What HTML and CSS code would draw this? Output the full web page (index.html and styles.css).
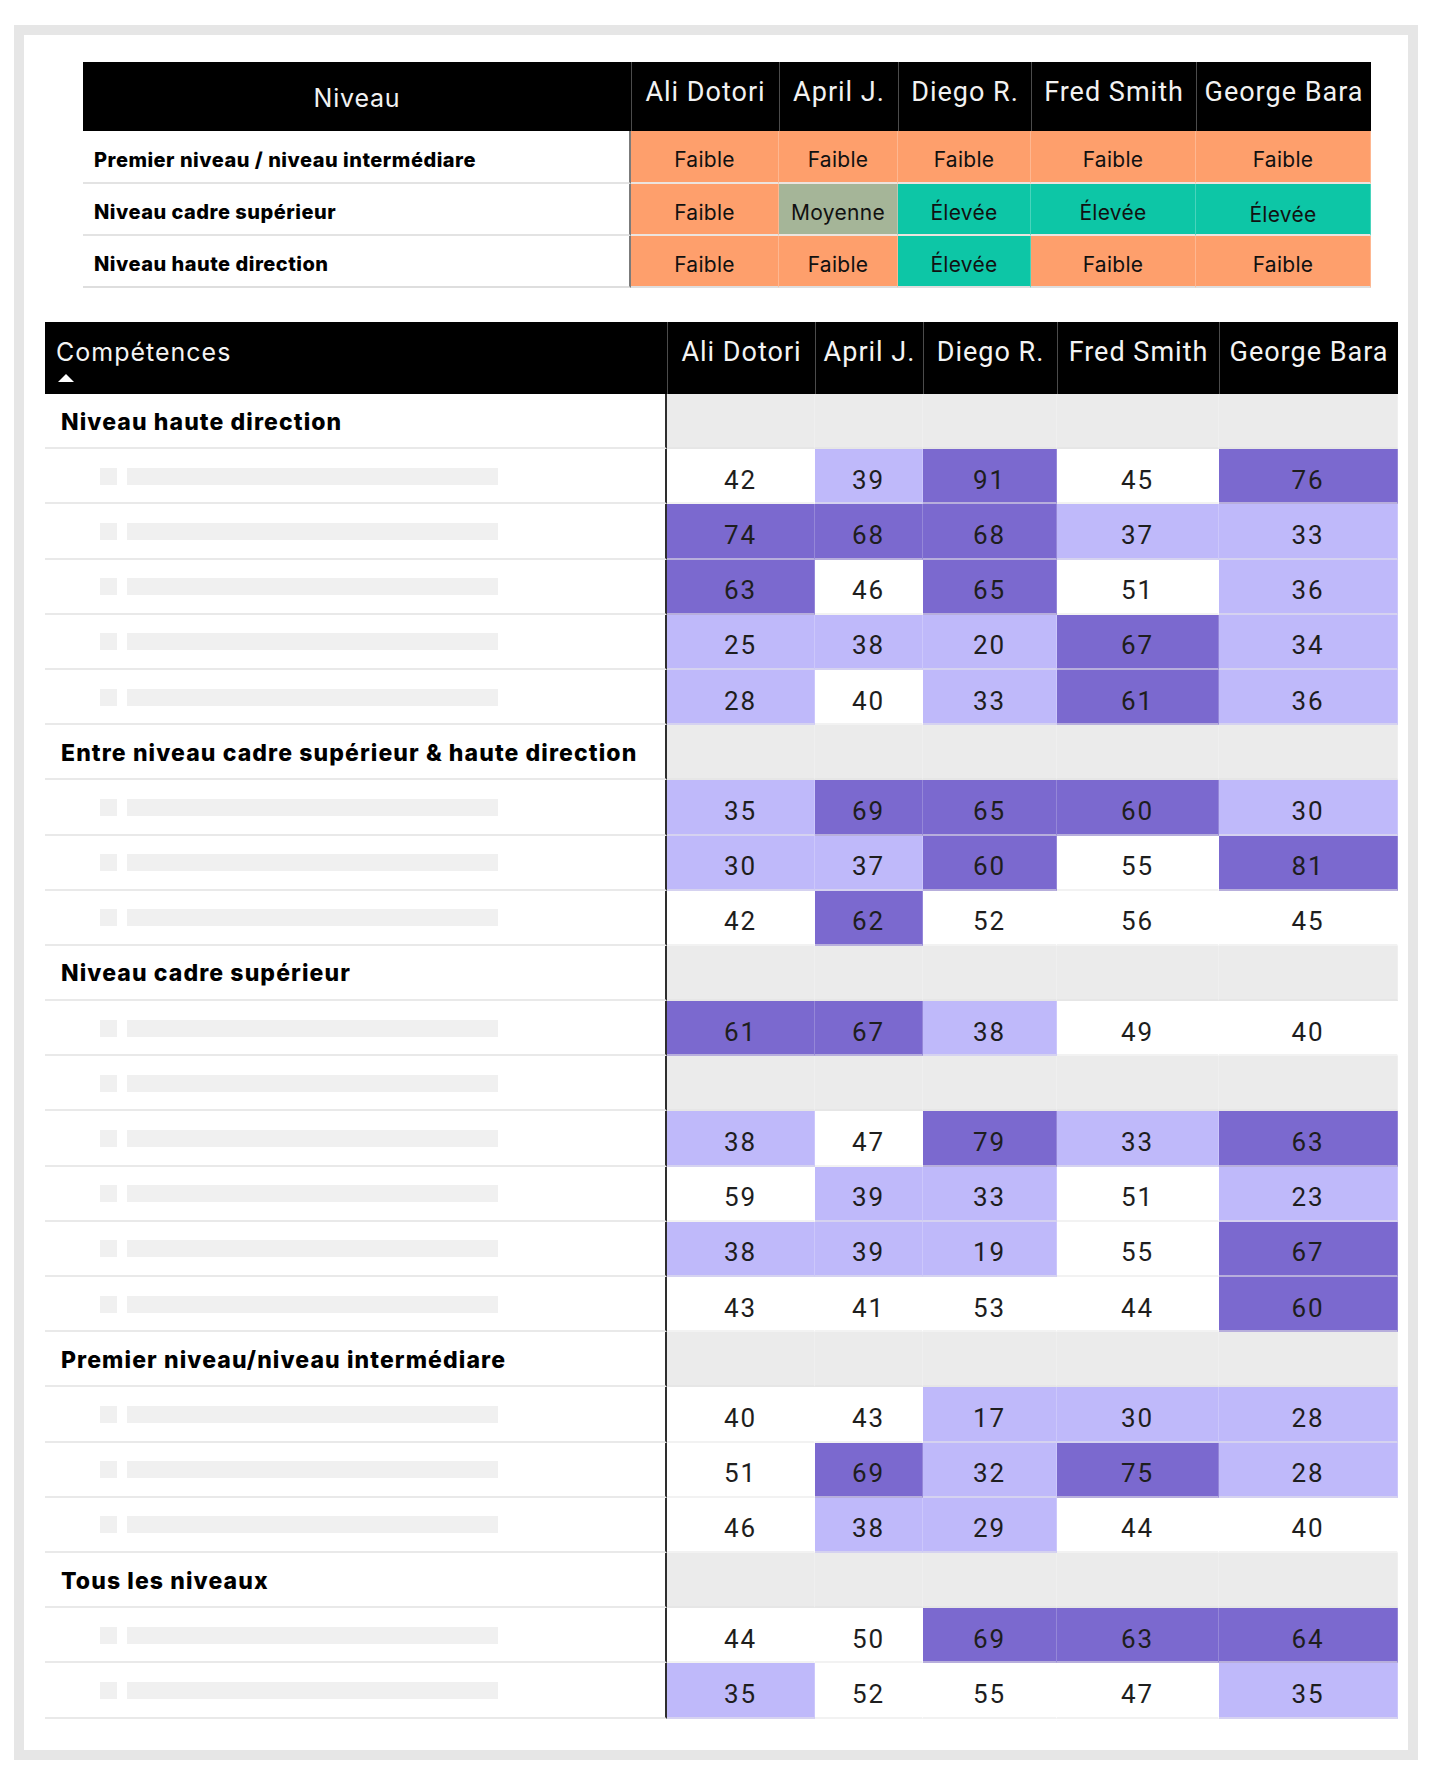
FILE: index.html
```html
<!DOCTYPE html>
<html lang="fr">
<head>
<meta charset="utf-8">
<title>Niveaux et compétences</title>
<link rel="stylesheet" href="styles.css">
</head>
<body>
<div class="frame">
  <div class="level-table">
    <div class="lt-head lt-title">Niveau</div>
    <div class="lt-head lt-name">Ali Dotori</div>
    <div class="lt-head lt-name">April J.</div>
    <div class="lt-head lt-name">Diego R.</div>
    <div class="lt-head lt-name">Fred Smith</div>
    <div class="lt-head lt-name">George Bara</div>

    <div class="lt-label">Premier niveau / niveau intermédiare</div>
    <div class="lt-cell low">Faible</div>
    <div class="lt-cell low">Faible</div>
    <div class="lt-cell low">Faible</div>
    <div class="lt-cell low">Faible</div>
    <div class="lt-cell low">Faible</div>

    <div class="lt-label">Niveau cadre supérieur</div>
    <div class="lt-cell low">Faible</div>
    <div class="lt-cell mid">Moyenne</div>
    <div class="lt-cell high">Élevée</div>
    <div class="lt-cell high">Élevée</div>
    <div class="lt-cell high lower">Élevée</div>

    <div class="lt-label last">Niveau haute direction</div>
    <div class="lt-cell low last">Faible</div>
    <div class="lt-cell low last">Faible</div>
    <div class="lt-cell high last">Élevée</div>
    <div class="lt-cell low last">Faible</div>
    <div class="lt-cell low last">Faible</div>
  </div>

  <div class="skill-table" id="skills">
    <div class="st-head st-title">Compétences<span class="sort-arrow"></span></div>
    <div class="st-head st-name">Ali Dotori</div>
    <div class="st-head st-name">April J.</div>
    <div class="st-head st-name">Diego R.</div>
    <div class="st-head st-name">Fred Smith</div>
    <div class="st-head st-name">George Bara</div>

    <div class="st-group">Niveau haute direction</div>
    <div class="st-num gray"></div><div class="st-num gray"></div><div class="st-num gray"></div><div class="st-num gray"></div><div class="st-num gray"></div>

    <div class="st-item"><span class="ph-box"></span><span class="ph-bar"></span></div>
    <div class="st-num">42</div><div class="st-num l">39</div><div class="st-num d">91</div><div class="st-num">45</div><div class="st-num d">76</div>
    <div class="st-item"><span class="ph-box"></span><span class="ph-bar"></span></div>
    <div class="st-num d">74</div><div class="st-num d">68</div><div class="st-num d">68</div><div class="st-num l">37</div><div class="st-num l">33</div>
    <div class="st-item"><span class="ph-box"></span><span class="ph-bar"></span></div>
    <div class="st-num d">63</div><div class="st-num">46</div><div class="st-num d">65</div><div class="st-num">51</div><div class="st-num l">36</div>
    <div class="st-item"><span class="ph-box"></span><span class="ph-bar"></span></div>
    <div class="st-num l">25</div><div class="st-num l">38</div><div class="st-num l">20</div><div class="st-num d">67</div><div class="st-num l">34</div>
    <div class="st-item"><span class="ph-box"></span><span class="ph-bar"></span></div>
    <div class="st-num l">28</div><div class="st-num">40</div><div class="st-num l">33</div><div class="st-num d">61</div><div class="st-num l">36</div>

    <div class="st-group">Entre niveau cadre supérieur &amp; haute direction</div>
    <div class="st-num gray"></div><div class="st-num gray"></div><div class="st-num gray"></div><div class="st-num gray"></div><div class="st-num gray"></div>

    <div class="st-item"><span class="ph-box"></span><span class="ph-bar"></span></div>
    <div class="st-num l">35</div><div class="st-num d">69</div><div class="st-num d">65</div><div class="st-num d">60</div><div class="st-num l">30</div>
    <div class="st-item"><span class="ph-box"></span><span class="ph-bar"></span></div>
    <div class="st-num l">30</div><div class="st-num l">37</div><div class="st-num d">60</div><div class="st-num">55</div><div class="st-num d">81</div>
    <div class="st-item"><span class="ph-box"></span><span class="ph-bar"></span></div>
    <div class="st-num">42</div><div class="st-num d">62</div><div class="st-num">52</div><div class="st-num">56</div><div class="st-num">45</div>

    <div class="st-group">Niveau cadre supérieur</div>
    <div class="st-num gray"></div><div class="st-num gray"></div><div class="st-num gray"></div><div class="st-num gray"></div><div class="st-num gray"></div>

    <div class="st-item"><span class="ph-box"></span><span class="ph-bar"></span></div>
    <div class="st-num d">61</div><div class="st-num d">67</div><div class="st-num l">38</div><div class="st-num">49</div><div class="st-num">40</div>
    <div class="st-item"><span class="ph-box"></span><span class="ph-bar"></span></div>
    <div class="st-num gray"></div><div class="st-num gray"></div><div class="st-num gray"></div><div class="st-num gray"></div><div class="st-num gray"></div>
    <div class="st-item"><span class="ph-box"></span><span class="ph-bar"></span></div>
    <div class="st-num l">38</div><div class="st-num">47</div><div class="st-num d">79</div><div class="st-num l">33</div><div class="st-num d">63</div>
    <div class="st-item"><span class="ph-box"></span><span class="ph-bar"></span></div>
    <div class="st-num">59</div><div class="st-num l">39</div><div class="st-num l">33</div><div class="st-num">51</div><div class="st-num l">23</div>
    <div class="st-item"><span class="ph-box"></span><span class="ph-bar"></span></div>
    <div class="st-num l">38</div><div class="st-num l">39</div><div class="st-num l">19</div><div class="st-num">55</div><div class="st-num d">67</div>
    <div class="st-item"><span class="ph-box"></span><span class="ph-bar"></span></div>
    <div class="st-num">43</div><div class="st-num">41</div><div class="st-num">53</div><div class="st-num">44</div><div class="st-num d">60</div>

    <div class="st-group">Premier niveau/niveau intermédiare</div>
    <div class="st-num gray"></div><div class="st-num gray"></div><div class="st-num gray"></div><div class="st-num gray"></div><div class="st-num gray"></div>

    <div class="st-item"><span class="ph-box"></span><span class="ph-bar"></span></div>
    <div class="st-num">40</div><div class="st-num">43</div><div class="st-num l">17</div><div class="st-num l">30</div><div class="st-num l">28</div>
    <div class="st-item"><span class="ph-box"></span><span class="ph-bar"></span></div>
    <div class="st-num">51</div><div class="st-num d">69</div><div class="st-num l">32</div><div class="st-num d">75</div><div class="st-num l">28</div>
    <div class="st-item"><span class="ph-box"></span><span class="ph-bar"></span></div>
    <div class="st-num">46</div><div class="st-num l">38</div><div class="st-num l">29</div><div class="st-num">44</div><div class="st-num">40</div>

    <div class="st-group">Tous les niveaux</div>
    <div class="st-num gray"></div><div class="st-num gray"></div><div class="st-num gray"></div><div class="st-num gray"></div><div class="st-num gray"></div>

    <div class="st-item"><span class="ph-box"></span><span class="ph-bar"></span></div>
    <div class="st-num">44</div><div class="st-num">50</div><div class="st-num d">69</div><div class="st-num d">63</div><div class="st-num d">64</div>
    <div class="st-item"><span class="ph-box"></span><span class="ph-bar"></span></div>
    <div class="st-num l">35</div><div class="st-num">52</div><div class="st-num">55</div><div class="st-num">47</div><div class="st-num l">35</div>
  </div>
</div>
</body>
</html>
```

FILE: styles.css
```css
* { box-sizing: border-box; }

html, body {
  margin: 0;
  padding: 0;
  background: #ffffff;
}

.frame {
  margin: 25px 0 0 14px;
  width: 1404px;
  height: 1735px;
  border: 10px solid #e6e6e6;
  background: #ffffff;
  padding-top: 27px;
}

/* ---------- top table ---------- */
.level-table {
  margin-left: 59px;
  width: 1288px;
  display: grid;
  grid-template-columns: 548px 148px 119px 133px 165px 175px;
  grid-template-rows: 69px 53px 52px 52px;
}

.lt-head {
  background: #000000;
  color: #f2f2f2;
  display: flex;
  align-items: center;
  justify-content: center;
}

.lt-title {
  font-family: "Inter", "Lato", sans-serif;
  font-size: 25px;
  font-weight: 400;
  letter-spacing: 0.8px;
  padding-top: 2px;
}

.lt-name {
  font-family: "Roboto", "Open Sans", sans-serif;
  font-size: 27px;
  letter-spacing: 1px;
  border-left: 1px solid #4b4b4b;
  padding-bottom: 9px;
  white-space: nowrap;
  overflow: hidden;
}

.lt-label {
  font-family: "Inter", "Lato", sans-serif;
  font-weight: 800;
  font-size: 20px;
  letter-spacing: 0.5px;
  color: #000;
  display: flex;
  align-items: center;
  padding-left: 11px;
  padding-top: 6px;
  border-bottom: 2px solid #e3e3e3;
  border-right: 2px solid #7b7b7b;
  white-space: nowrap;
}

.lt-cell {
  font-family: "Inter", "Lato", sans-serif;
  font-size: 21px;
  font-weight: 400;
  letter-spacing: 0.3px;
  color: #111;
  display: flex;
  align-items: center;
  justify-content: center;
  padding-top: 6px;
  border-bottom: 2px solid #ece4df;
  border-right: 1px solid rgba(255, 255, 255, 0.25);
}

.lt-cell.last, .lt-label.last { border-bottom-color: #dedede; }

.low  { background: #fe9f6c; }
.mid  { background: #a5b598; }
.high { background: #0dc6a6; }
.lower { padding-top: 11px; }

/* ---------- skills table ---------- */
.skill-table {
  margin-left: 21px;
  margin-top: 34px;
  width: 1353px;
  display: grid;
  grid-template-columns: 622px 148px 108px 134px 162px 179px;
  grid-template-rows: 72px;
  grid-auto-rows: 55.2px;
}

.st-head {
  background: #000000;
  color: #f4f4f4;
  display: flex;
  align-items: center;
  padding-bottom: 12px;
}

.st-title {
  position: relative;
  font-family: "Inter", "Lato", sans-serif;
  font-size: 25px;
  font-weight: 400;
  letter-spacing: 1px;
  padding-left: 11px;
}

.sort-arrow {
  position: absolute;
  left: 13px;
  top: 52px;
  width: 0;
  height: 0;
  border-left: 8px solid transparent;
  border-right: 8px solid transparent;
  border-bottom: 8px solid #ffffff;
}

.st-name {
  justify-content: center;
  font-family: "Roboto", "Open Sans", sans-serif;
  font-size: 27px;
  letter-spacing: 1px;
  border-left: 1px solid #4b4b4b;
  white-space: nowrap;
}

.st-group {
  font-family: "Inter", "Lato", sans-serif;
  font-weight: 800;
  font-size: 23px;
  letter-spacing: 1.1px;
  color: #000;
  display: flex;
  align-items: center;
  padding-left: 16px;
  padding-top: 2px;
  border-bottom: 2px solid #e9e9e9;
  border-right: 2px solid #2e2e2e;
  white-space: nowrap;
}

.st-item {
  display: flex;
  align-items: center;
  padding-left: 55px;
  padding-top: 1px;
  border-bottom: 2px solid #e9e9e9;
  border-right: 2px solid #2e2e2e;
}

.ph-box {
  width: 17px;
  height: 17px;
  background: #f0f0f0;
  margin-right: 10px;
}

.ph-bar {
  width: 371px;
  height: 17px;
  background: #f0f0f0;
}

.st-num {
  font-family: "Roboto", "Open Sans", sans-serif;
  font-size: 26px;
  letter-spacing: 1.8px;
  color: #1e1e1e;
  display: flex;
  align-items: center;
  justify-content: center;
  padding-top: 8px;
  background: #ffffff;
  border-bottom: 2px solid rgba(232, 232, 232, 0.55);
  border-right: 1px solid rgba(255, 255, 255, 0.2);
}

.st-num.gray { background: #ebebeb; border-bottom-color: #e6e6e6; }
.st-num.l { background: #bfb9fa; }
.st-num.d { background: #7b69cf; }
```
